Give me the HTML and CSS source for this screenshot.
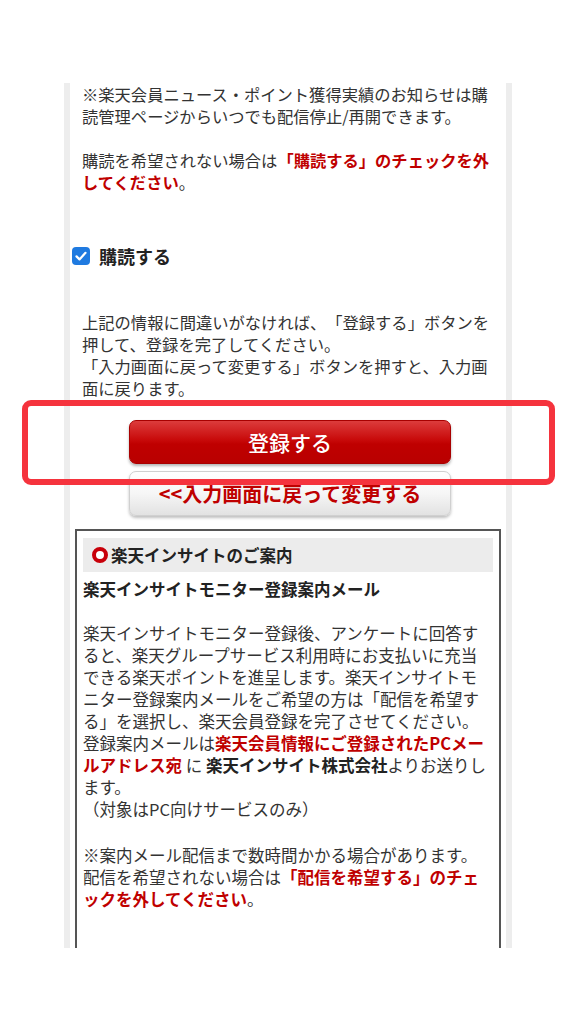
FILE: index.html
```html
<!DOCTYPE html>
<html lang="ja">
<head>
  <meta charset="UTF-8" />
  <meta name="viewport" content="width=device-width, initial-scale=1" />
  <title>楽天会員登録 確認</title>
  <link rel="stylesheet" href="styles.css">
</head>
<body>

  <div class="panel">
    <p class="note first">※楽天会員ニュース・ポイント獲得実績のお知らせは購読管理ページからいつでも配信停止/再開できます。</p>
    <p class="note">購読を希望されない場合は<strong class="red">「購読する」のチェックを外してください</strong>。</p>

    <label class="subscribe">
      <span class="check">
        <svg width="18" height="18" viewBox="0 0 18 18"><rect width="18" height="18" rx="4" fill="#1f7ae0"/><path d="M4.5 9.4l3 3 6-6.6" fill="none" stroke="#fff" stroke-width="2.2" stroke-linecap="round" stroke-linejoin="round"/></svg>
      </span>
      購読する
    </label>

    <p class="note confirm">上記の情報に間違いがなければ、「登録する」ボタンを押して、登録を完了してください。<br>「入力画面に戻って変更する」ボタンを押すと、入力画面に戻ります。</p>

    <div class="actions">
      <button class="btn btn-register">登録する</button>
      <button class="btn btn-back">&lt;&lt;入力画面に戻って変更する</button>
    </div>

    <div class="insight">
      <div class="insight-head"><span class="ring"></span>楽天インサイトのご案内</div>
      <h4 class="insight-title">楽天インサイトモニター登録案内メール</h4>
      <p class="insight-text">楽天インサイトモニター登録後、アンケートに回答すると、楽天グループサービス利用時にお支払いに充当できる楽天ポイントを進呈します。楽天インサイトモニター登録案内メールをご希望の方は「配信を希望する」を選択し、楽天会員登録を完了させてください。<br>登録案内メールは<strong class="red">楽天会員情報にご登録されたPCメールアドレス宛</strong> に <strong class="company">楽天インサイト株式会社</strong>よりお送りします。<br>（対象はPC向けサービスのみ）</p>
      <p class="insight-text">※案内メール配信まで数時間かかる場合があります。<br>配信を希望されない場合は<strong class="red">「配信を希望する」のチェ<br>ックを外してください</strong>。</p>
    </div>
  </div>

  <div class="highlight"></div>

</body>
</html>
```

FILE: styles.css
```css
body {
  margin: 0;
  background: #fff;
  color: #333;
  font-family: "Noto Sans CJK JP", "Noto Sans", sans-serif;
  font-size: 16.3px;
  line-height: 22px;
  text-spacing-trim: space-all;
}
.panel {
  margin: 83px 64px 0;
  height: 865px;
  overflow: hidden;
  border-left: 6px solid #ededed;
  border-right: 6px solid #ededed;
  padding: 0 5px;
}
p {
  margin: 0;
}
.note {
  padding: 0 7px;
  margin-top: 22px;
}
.note.first {
  margin-top: 0;
}
.red {
  color: #bf0000;
}
strong {
  font-weight: bold;
}
.subscribe {
  display: flex;
  align-items: center;
  gap: 9px;
  margin: 51px 0 0 -3px;
  font-size: 18px;
  line-height: 24px;
  font-weight: bold;
  color: #222;
}
.check {
  display: flex;
}
.note.confirm {
  margin-top: 43px;
}
.actions {
  display: flex;
  flex-direction: column;
  align-items: center;
  gap: 7px;
  margin-top: 21px;
  padding-left: 4px;
}
.btn {
  width: 322px;
  height: 45px;
  border-radius: 7px;
  font-family: inherit;
  font-size: 20px;
  cursor: pointer;
}
.btn-register {
  height: 44px;
  color: #fff;
  font-size: 21px;
  font-weight: 500;
  border: 1px solid #a80000;
  background: linear-gradient(#dc3c3c 0%, #c80a0a 45%, #bf0000 55%, #b90000 100%);
  box-shadow: 0 2px 3px rgba(0, 0, 0, 0.3);
}
.btn-back {
  color: #bf0000;
  font-weight: bold;
  border: 1px solid #d0d0d0;
  background: linear-gradient(#ffffff 0%, #f6f6f6 50%, #e2e2e2 100%);
  box-shadow: 0 2px 3px rgba(0, 0, 0, 0.25);
}
.insight {
  margin-top: 13px;
  border: 2px solid #555;
  border-bottom: none;
  padding: 7px 6px 60px;
  font-size: 16.5px;
}
.insight .company {
  color: #222;
}
.insight-head {
  display: flex;
  align-items: center;
  gap: 3px;
  height: 34px;
  padding-left: 9px;
  background: #ececec;
  font-weight: bold;
  color: #222;
}
.ring {
  width: 8px;
  height: 8px;
  border: 4px solid #c8000a;
  border-radius: 50%;
  background: #fff;
}
.insight-title {
  margin: 6px 0 22px;
  font-size: 16.5px;
  line-height: 22px;
  color: #222;
}
.insight-text {
  margin-bottom: 24px;
}
.highlight {
  position: absolute;
  left: 22px;
  top: 400px;
  width: 533px;
  height: 85px;
  box-sizing: border-box;
  border: 6px solid #f5333d;
  border-radius: 9px;
}
```
